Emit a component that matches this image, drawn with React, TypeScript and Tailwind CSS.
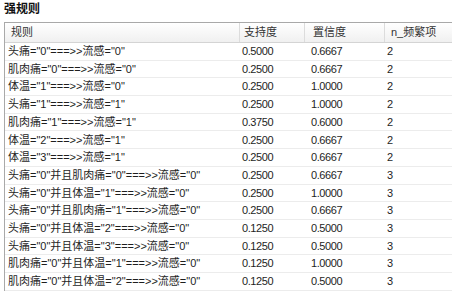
import React from "react";

const rows: [string, string, string, string][] = [
  ['头痛="0"===>>流感="0"', "0.5000", "0.6667", "2"],
  ['肌肉痛="0"===>>流感="0"', "0.2500", "0.6667", "2"],
  ['体温="1"===>>流感="0"', "0.2500", "1.0000", "2"],
  ['头痛="1"===>>流感="1"', "0.2500", "1.0000", "2"],
  ['肌肉痛="1"===>>流感="1"', "0.3750", "0.6000", "2"],
  ['体温="2"===>>流感="1"', "0.2500", "0.6667", "2"],
  ['体温="3"===>>流感="1"', "0.2500", "0.6667", "2"],
  ['头痛="0"并且肌肉痛="0"===>>流感="0"', "0.2500", "0.6667", "3"],
  ['头痛="0"并且体温="1"===>>流感="0"', "0.2500", "1.0000", "3"],
  ['头痛="0"并且肌肉痛="1"===>>流感="0"', "0.2500", "0.6667", "3"],
  ['头痛="0"并且体温="2"===>>流感="0"', "0.1250", "0.5000", "3"],
  ['头痛="0"并且体温="3"===>>流感="0"', "0.1250", "0.5000", "3"],
  ['肌肉痛="0"并且体温="1"===>>流感="0"', "0.1250", "1.0000", "3"],
  ['肌肉痛="0"并且体温="2"===>>流感="0"', "0.1250", "0.5000", "3"],
];

export default function App() {
  return (
    <div
      className="w-[452px] h-[292px] overflow-hidden bg-white text-[#1e1e1e]"
      style={{ fontFamily: '"Liberation Sans", "Noto Sans CJK SC", sans-serif' }}
    >
      <div className="h-[22px] pl-[4px] pt-[1px] text-[12px] font-bold leading-[16px] text-[#111]">
        强规则
      </div>
      <div className="ml-[4px] border-l border-t border-[#a9a9a9]">
        <div className="flex h-[20px] items-center border-b border-[#d4d4d4] bg-gradient-to-b from-white to-[#f0f0f0] text-[11px] text-[#333]">
          <div className="w-[235px] h-full flex items-center pl-[6px] border-r border-[#dcdcdc]">规则</div>
          <div className="w-[65px] h-full flex items-center pl-[4px] border-r border-[#dcdcdc]">支持度</div>
          <div className="w-[80px] h-full flex items-center pl-[8px] border-r border-[#dcdcdc]">置信度</div>
          <div className="flex-1 h-full flex items-center pl-[6px]">n_频繁项</div>
        </div>
        {rows.map((r, i) => (
          <div
            key={i}
            className="flex h-[17.7px] items-center border-b border-[#ececec] text-[11px]"
          >
            <div className="w-[235px] pl-[3px] whitespace-nowrap">{r[0]}</div>
            <div className="w-[65px] pl-[2px] tracking-[-0.4px]">{r[1]}</div>
            <div className="w-[80px] pl-[6px] tracking-[-0.4px]">{r[2]}</div>
            <div className="flex-1 pl-[2px]">{r[3]}</div>
          </div>
        ))}
      </div>
    </div>
  );
}
